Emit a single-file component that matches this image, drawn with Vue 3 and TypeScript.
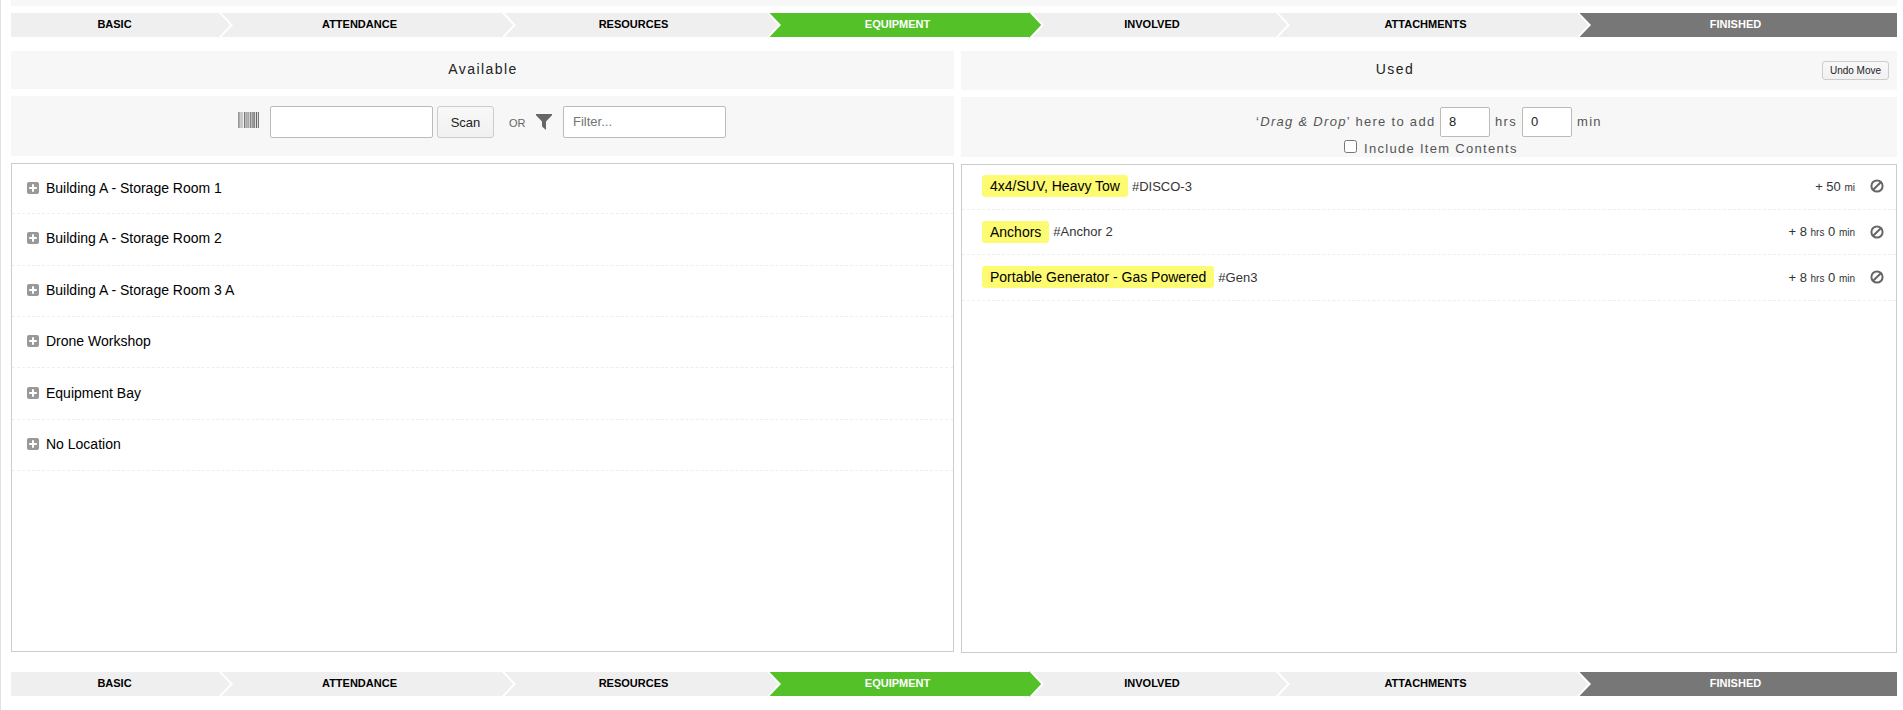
<script setup lang="ts">
import { ref } from 'vue'

interface Step {
  label: string
  width: number
  kind: 'plain' | 'active' | 'done'
}

interface UsedItem {
  name: string
  code: string
  amounts: { value: string; unit: string }[]
}

const steps: Step[] = [
  { label: 'BASIC', width: 207, kind: 'plain' },
  { label: 'ATTENDANCE', width: 283, kind: 'plain' },
  { label: 'RESOURCES', width: 265, kind: 'plain' },
  { label: 'EQUIPMENT', width: 263, kind: 'active' },
  { label: 'INVOLVED', width: 246, kind: 'plain' },
  { label: 'ATTACHMENTS', width: 301, kind: 'plain' },
  { label: 'FINISHED', width: 321, kind: 'done' },
]

const locations = [
  'Building A - Storage Room 1',
  'Building A - Storage Room 2',
  'Building A - Storage Room 3 A',
  'Drone Workshop',
  'Equipment Bay',
  'No Location',
]

const used: UsedItem[] = [
  { name: '4x4/SUV, Heavy Tow', code: '#DISCO-3', amounts: [{ value: '50', unit: 'mi' }] },
  { name: 'Anchors', code: '#Anchor 2', amounts: [{ value: '8', unit: 'hrs' }, { value: '0', unit: 'min' }] },
  { name: 'Portable Generator - Gas Powered', code: '#Gen3', amounts: [{ value: '8', unit: 'hrs' }, { value: '0', unit: 'min' }] },
]

// grey level of each one-pixel barcode stripe, left to right
const stripes: string[] = [
  '#999', '#aaa', '#ccc', '#c4c4c4', '#ccc', '#f0f0f0', '#777',
  '#bbb', '#aaa', '#b4b4b4', '#aaa', '#ccc', '#888', '#bbb',
  '#999', '#999', '#888', '#ddd', '#666', '#ddd', '#777',
]

const scanCode = ref('')
const filter = ref('')
const hours = ref('8')
const minutes = ref('0')
const includeContents = ref(false)
</script>

<template>
  <div class="page">
    <div class="strip"></div>
    <nav v-for="pos in ['top', 'bottom']" :key="pos" class="steps" :class="pos">
      <div
        v-for="(step, i) in steps"
        :key="step.label"
        class="step"
        :class="step.kind"
        :style="{ width: step.width + 'px' }"
      >
        <span>{{ step.label }}</span>
        <svg v-if="i < steps.length - 1" class="arrow" width="16" height="26" viewBox="0 0 16 26">
          <path class="edge" d="M0 0H2.5L15 13L2.5 26H0Z" />
          <path class="fill" d="M0 0L12.2 13L0 26Z" />
        </svg>
      </div>
    </nav>

    <main class="columns">
      <section class="col available">
        <header class="title">Available</header>
        <div class="tools">
          <svg class="barcode" width="21" height="16" viewBox="0 0 21 16">
            <rect v-for="(shade, x) in stripes" :key="x" :x="x" y="0" width="1" height="16" :fill="shade" />
          </svg>
          <input v-model="scanCode" class="field" type="text" />
          <button class="btn scan">Scan</button>
          <span class="or">OR</span>
          <svg class="funnel" width="16" height="16" viewBox="0 0 16 16">
            <path d="M0 0H16V1.2L10 7.6V16L6 12.6V7.6L0 1.2Z" fill="#666" />
          </svg>
          <input v-model="filter" class="field" type="text" placeholder="Filter..." />
        </div>
        <div class="list">
          <div v-for="name in locations" :key="name" class="place">
            <svg width="12" height="12" viewBox="0 0 12 12">
              <rect width="12" height="12" rx="2" fill="#999" />
              <path d="M6 2.2V9.8M2.2 6H9.8" stroke="#fff" stroke-width="2" />
            </svg>
            <span>{{ name }}</span>
          </div>
        </div>
      </section>

      <section class="col used">
        <header class="title">Used<button class="btn undo">Undo Move</button></header>
        <div class="drop">
          <div class="line">
            <span>‘<em>Drag &amp; Drop</em>’ here to add</span>
            <input v-model="hours" class="field num" type="text" />
            <span>hrs</span>
            <input v-model="minutes" class="field num" type="text" />
            <span>min</span>
          </div>
          <label class="include"><input v-model="includeContents" type="checkbox" /><span>Include Item Contents</span></label>
        </div>
        <div class="list">
          <div v-for="item in used" :key="item.code" class="item">
            <span class="tag">{{ item.name }}</span>
            <span class="code">{{ item.code }}</span>
            <span class="amount">+ <template v-for="a in item.amounts" :key="a.unit">{{ a.value }} <small>{{ a.unit }}</small>{{ ' ' }}</template></span>
            <svg class="ban" width="14" height="14" viewBox="0 0 14 14" fill="none" stroke="#666" stroke-width="2">
              <circle cx="7" cy="7" r="5.6" />
              <path d="M3.2 10.8L10.8 3.2" />
            </svg>
          </div>
        </div>
      </section>
    </main>
  </div>
</template>

<style>
html,
body {
  margin: 0;
  background: #fff;
}
</style>

<style scoped>
.page {
  box-sizing: border-box;
  width: 1903px;
  height: 710px;
  overflow: hidden;
  padding: 0 6px 0 10px;
  border-left: 1px solid #e2e2e2;
  display: flex;
  flex-direction: column;
  font-family: 'Liberation Sans', Arial, sans-serif;
  color: #333;
}
.page *,
.page *::before {
  box-sizing: border-box;
}
.strip {
  flex: none;
  height: 6px;
  background: #f7f7f7;
}
.steps {
  flex: none;
  display: flex;
  height: 24px;
  margin-top: 7px;
}
.steps.bottom {
  order: 2;
  margin-top: 19px;
}
.step {
  position: relative;
  height: 24px;
  background: #efefef;
  color: #000;
  font-size: 11px;
  font-weight: bold;
  line-height: 22px;
  text-align: center;
}
.step.active {
  background: #54c129;
  color: #fff;
}
.step.done {
  padding-right: 2px;
  background: #777;
  color: #fff;
}
.arrow {
  position: absolute;
  z-index: 1;
  left: 100%;
  top: -1px;
}
.edge {
  fill: #fff;
}
.fill {
  fill: #efefef;
}
.active .fill {
  fill: #54c129;
}
.columns {
  flex: none;
  display: flex;
  gap: 7px;
  margin-top: 14px;
  height: 602px;
}
.col {
  display: flex;
  flex-direction: column;
  gap: 7px;
}
.available {
  width: 943px;
  height: 601px;
}
.used {
  width: 936px;
  height: 602px;
}
.title {
  position: relative;
  flex: none;
  height: 38px;
  padding-left: 1px;
  background: #f7f7f7;
  color: #222;
  font-size: 14px;
  letter-spacing: 1.45px;
  line-height: 36px;
  text-align: center;
}
.used .title {
  height: 39px;
  padding-right: 69px;
}
.btn {
  padding: 0;
  border: 1px solid #ccc;
  border-radius: 3px;
  background: linear-gradient(#f8f8f8, #f1f1f1);
  color: #222;
  font-family: inherit;
}
.undo {
  position: absolute;
  right: 8px;
  top: 10px;
  width: 67px;
  height: 19px;
  font-size: 10px;
  line-height: 17px;
}
.tools {
  flex: none;
  display: flex;
  height: 60px;
  padding: 10px 0 0 227px;
  background: #f7f7f7;
}
.barcode {
  margin: 6px 11px 0 0;
}
.field {
  width: 163px;
  height: 32px;
  padding: 0 9px 1px;
  border: 1px solid #bbb;
  border-radius: 2px;
  outline: none;
  background: #fff;
  color: #222;
  font-family: inherit;
  font-size: 13px;
}
.field::placeholder {
  color: #757575;
}
.scan {
  width: 57px;
  height: 32px;
  margin-left: 4px;
  font-size: 13px;
}
.or {
  width: 27px;
  margin-left: 15px;
  color: #666;
  font-size: 11px;
  line-height: 34px;
}
.funnel {
  margin: 8px 11px 0 0;
}
.drop {
  flex: none;
  height: 60px;
  padding-top: 10px;
  background: #f7f7f7;
  color: #555;
  font-size: 13px;
  letter-spacing: 1.3px;
}
.line {
  display: flex;
  padding-left: 295px;
  line-height: 29px;
  white-space: nowrap;
}
.line span:nth-of-type(1) {
  width: 184px;
}
.line span:nth-of-type(2) {
  width: 27px;
}
.num {
  width: 50px;
  height: 30px;
  padding: 0 8px 1px;
}
.num + span {
  margin-left: 5px;
}
.include {
  display: flex;
  height: 20px;
  padding-left: 383px;
  line-height: 24px;
}
.include input {
  width: 13px;
  height: 13px;
  margin: 3px 7px 0 0;
}
.list {
  flex: 1;
  border: 1px solid #ccc;
}
.place {
  display: flex;
  align-items: center;
  height: 51.4px;
  padding: 0 0 2px 15px;
  border-bottom: 1px dashed #eee;
  color: #000;
  font-size: 14px;
}
.place:first-child {
  height: 50.2px;
  padding-bottom: 1px;
}
.place svg {
  margin: 0 7px 0 0;
}
.item {
  display: flex;
  align-items: center;
  height: 45.6px;
  padding: 0 12px 0 20px;
  border-bottom: 1px dashed #eee;
}
.item:first-child {
  height: 44.6px;
  padding-bottom: 1px;
}
.tag {
  height: 22px;
  padding: 0 8px;
  border-radius: 3px;
  background: #fdfb72;
  color: #000;
  font-size: 14px;
  line-height: 22px;
}
.code {
  margin-left: 4px;
  font-size: 13px;
}
.amount {
  margin-left: auto;
  font-size: 13px;
}
.amount small {
  font-size: 10px;
}
.ban {
  margin-left: 15px;
}
</style>
